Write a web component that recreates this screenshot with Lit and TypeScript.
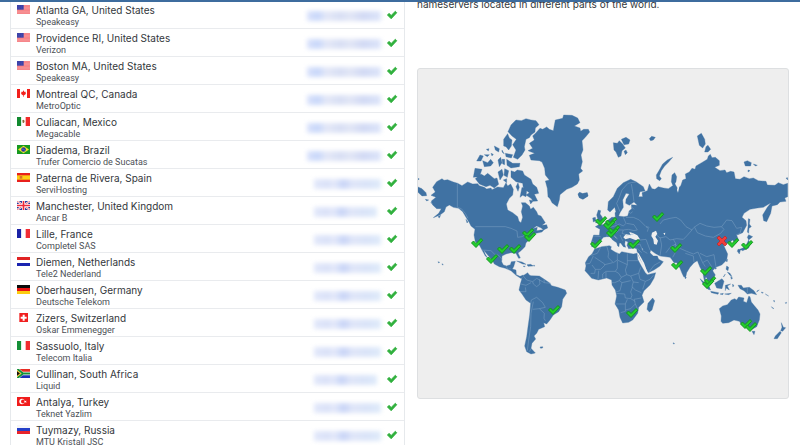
import { LitElement, html, svg, css } from "lit";
import { customElement, property } from "lit/decorators.js";
import { classMap } from "lit/directives/class-map.js";

interface Server {
  flag: string;
  place: string;
  isp: string;
  kind: string;
}

const SERVERS: Server[] = [
  { flag: "us", place: "Atlanta GA, United States", isp: "Speakeasy", kind: "wide" },
  { flag: "us", place: "Providence RI, United States", isp: "Verizon", kind: "wide" },
  { flag: "us", place: "Boston MA, United States", isp: "Speakeasy", kind: "wide" },
  { flag: "ca", place: "Montreal QC, Canada", isp: "MetroOptic", kind: "wide" },
  { flag: "mx", place: "Culiacan, Mexico", isp: "Megacable", kind: "wide" },
  { flag: "br", place: "Diadema, Brazil", isp: "Trufer Comercio de Sucatas", kind: "wide" },
  { flag: "es", place: "Paterna de Rivera, Spain", isp: "ServiHosting", kind: "slim" },
  { flag: "gb", place: "Manchester, United Kingdom", isp: "Ancar B", kind: "speck" },
  { flag: "fr", place: "Lille, France", isp: "Completel SAS", kind: "slim" },
  { flag: "nl", place: "Diemen, Netherlands", isp: "Tele2 Nederland", kind: "slim" },
  { flag: "de", place: "Oberhausen, Germany", isp: "Deutsche Telekom", kind: "slim" },
  { flag: "ch", place: "Zizers, Switzerland", isp: "Oskar Emmenegger", kind: "slim" },
  { flag: "it", place: "Sassuolo, Italy", isp: "Telecom Italia", kind: "slim" },
  { flag: "za", place: "Cullinan, South Africa", isp: "Liquid", kind: "speck" },
  { flag: "tr", place: "Antalya, Turkey", isp: "Teknet Yazlim", kind: "slim" },
  { flag: "ru", place: "Tuymazy, Russia", isp: "MTU Kristall JSC", kind: "slim" },
];

const tri = (a: string, b: string, c: string, vertical: boolean) =>
  vertical
    ? svg`<path fill=${a} d="M0 0h13v27H0z"/><path fill=${b} d="M13 0h13v27H13z"/><path fill=${c} d="M26 0h13v27H26z"/>`
    : svg`<path fill=${a} d="M0 0h39v9H0z"/><path fill=${b} d="M0 9h39v9H0z"/><path fill=${c} d="M0 18h39v9H0z"/>`;

const FLAGS: Record<string, unknown> = {
  us: svg`<path fill="#fba8aa" d="M0 0h39v27H0z"/><path stroke="#f36a70" stroke-width="2" d="M0 1h39M0 5h39M0 9h39M0 13h39M0 17h39M0 21h39M0 25h39"/><path fill="#3a40a8" d="M0 0h20v14H0z"/><path stroke="#6a70c0" stroke-dasharray="2 3" d="M2 3h17M3 7h16M2 11h17"/>`,
  ca: svg`<path fill="#fff" d="M0 0h39v27H0z"/><path fill="#f2201c" d="M0 0h9v27H0zM30 0h9v27h-9zM19.500 4l3 5 4-1-1 5 2 1-6 5h-1v4h-2v-4h-1l-6-5 2-1-1-5 4 1z"/>`,
  mx: svg`${tri("#128a30", "#fff", "#f22a2a", true)}<path fill="#8a6a3a" d="M16 10l4-2 3 4-2 6-4-1z"/>`,
  br: svg`<path fill="#179a20" d="M0 0h39v27H0z"/><path fill="#f5e32a" d="M19.500 2L36 13.500 19.500 25 3 13.500z"/><circle cx="19.500" cy="13.500" r="7" fill="#2436a0"/><path stroke="#dfe8ff" fill="none" d="M13 12q8-1 12 5"/>`,
  es: svg`<path fill="#e8201c" d="M0 0h39v27H0z"/><path fill="#fccf14" d="M0 7h39v13H0z"/><path fill="#d8732a" d="M8 9h8v8H8z"/>`,
  gb: svg`<path fill="#2a3a9c" d="M0 0h39v27H0z"/><path stroke="#fff" stroke-width="6" d="M0 0l39 27M39 0L0 27"/><path stroke="#ee3a48" stroke-width="2" d="M0 0l39 27M39 0L0 27"/><path stroke="#fff" stroke-width="9" d="M19.500 0v27M0 13.500h39"/><path stroke="#ee2a3a" stroke-width="5" d="M19.500 0v27M0 13.500h39"/>`,
  fr: tri("#1a22a6", "#fff", "#f22c34", true),
  nl: tri("#e02424", "#fff", "#1a24b0", false),
  de: tri("#0a0a0a", "#e81414", "#fccc10", false),
  ch: svg`<path fill="#f02020" d="M7 0h26v27H7z"/><path fill="#fff" d="M17 5h6v6h6v6h-6v6h-6v-6h-6v-6h6z"/>`,
  it: tri("#149038", "#fff", "#f02c30", true),
  za: svg`<path fill="#fff" d="M0 0h39v27H0z"/><path fill="#e82c24" d="M8 0h31v8H17z"/><path fill="#1c30b8" d="M17 19h22v8H8z"/><path fill="none" stroke="#149038" stroke-width="6" d="M1 0l17 13.500L1 27M16 13.500h23"/><path fill="#f8c020" d="M0 3l13 10.500L0 24z"/><path fill="#101010" d="M0 7l9 6.500L0 20z"/>`,
  tr: svg`<path fill="#f01c1c" d="M0 0h39v27H0z"/><circle cx="15" cy="13.500" r="8" fill="#fff"/><circle cx="18" cy="13.500" r="6" fill="#f01c1c"/><path fill="#fff" d="M23 10l2 2 4-1-2 3 2 3-4-1-2 2v-3l-3-1 3-1z"/>`,
  ru: tri("#f6f6f8", "#2440c8", "#e8242c", false),
};

const TICK = "M-5.500 0L-3.500-2-1 .5 4-4.500 5.700-2.700-1 4.500z";

/* Each land group keeps its own local grid of a third of a map unit. */
const LANDS = [
  {
    at: "translate(416 100)",
    land: `M50 262L62 245 78 236 84 241 95 239 112 246 125 250 138 257 155 246 170 252 185 251 190 257 205 262 212 267 225 264 228 269 245 261 262 263 270 248 275 258 284 252 292 268 290 285 280 295 271 312 275 330 290 338 305 350 309 364 315 368 320 352 316 335 320 318 316 308 328 308 340 318 344 328 352 322 362 335 366 345 375 348 388 368 378 376 392 374 395 384 382 390 376 384 362 378 350 386 364 382 362 392 385 388 378 396 360 400 345 415 330 428 327 440 315 452 306 459 313 474 308 475 300 460 285 458 270 462 258 468 257 485 262 495 272 498 283 494 286 485 298 484 293 500 289 507 300 510 301 524 312 529 322 525 316 536 300 526 285 512 268 505 250 500 235 492 230 482 215 465 203 450 208 463 215 474 208 468 198 450 190 435 178 425 174 405 177 388 165 378 160 368 150 352 140 335 128 325 112 322 100 315 90 321 85 335 72 345 52 353 68 340 76 326 62 326 50 315 46 303 60 292 45 286 58 276z
M320 528L335 518 340 525 345 527 370 528 385 538 400 548 407 557 425 562 448 570 452 580 440 598 437 620 428 635 412 645 402 660 392 672 383 668 386 680 368 688 362 700 354 708 359 717 348 730 345 745 358 759 345 762 332 755 326 738 332 710 336 680 341 645 344 610 330 600 318 582 309 570 313 552z
M424 320L408 308 402 296 396 290 394 265 388 243 400 240 388 225 386 205 378 186 370 182 345 180 340 166 356 160 336 152 350 145 340 130 355 120 350 108 360 98 372 85 380 88 392 81 400 88 412 92 415 75 418 60 440 55 443 45 468 46 485 54 492 68 475 78 492 84 494 94 503 88 517 88 521 96 508 112 498 122 501 150 495 165 499 185 494 205 500 213 488 222 490 240 484 252 468 262 452 268 432 284 430 300z
M276 95L285 75 300 60 316 62 330 56 345 60 360 62 369 74 358 84 357 96 345 105 340 113 330 118 325 140 327 150 318 165 305 178 292 172 300 150 290 134 301 118 288 108z
M263 118L275 101 280 114 288 120 286 138 278 150 270 140 263 138z
M285 212L296 216 304 210 320 213 325 225 345 238 350 252 362 262 368 280 355 283 365 303 352 304 345 295 330 285 340 278 322 265 320 250 300 245 285 232z
M178 236L195 222 205 228 215 220 235 236 243 234 248 253 235 264 222 256 210 260 190 252z
M172 232L177 205 198 208 190 230z M182 183L192 165 202 168 195 183z M200 182L215 188 224 178 232 188 224 198 205 200z M235 138L250 146 248 156 238 150z M211 148L219 146 217 153z M205 164L220 164 214 170z M225 160L232 163 228 168z M246 180L254 172 258 188 250 200z M258 150L265 162 258 156z M258 178L266 178 266 194 260 192z M268 160L290 164 286 174 270 170z M272 178L290 190 312 190 310 200 285 204 273 196z M246 216L258 208 262 225 252 240z M266 206L278 212 274 232 264 226z M262 240L272 236 272 248z M300 260L306 248 310 262 306 274z M318 262L332 272 330 290 320 286 312 292z M340 300L352 302 344 312z
M486 282L490 277 500 281 512 278 516 288 500 298 490 293z M4 260L18 266 30 278 32 287 18 288 4 275z M4 234L10 237 4 241z M28 298L38 300 32 303z M44 308L52 306 52 313z M66 350L74 346 70 354z M150 358L156 366 153 369z M302 483L318 486 330 493 320 492z M333 494L344 493 352 498 336 499z M322 498L328 499 324 501z M352 496L356 496 355 499z M372 741L380 740 380 744 374 745z M66 485L71 487 68 489z M78 491L82 494 79 495z`,
    lines: `M124 249V322L136 326 148 340 156 355M178 380H268L285 385 303 393 305 412 318 410 335 400 345 392M198 450L225 452 235 462 248 466 258 478M270 498L276 508 284 506M322 528L332 540 350 545 362 535 385 548 405 550M315 552L330 556 345 548M312 575L330 575 328 562M344 610L346 600 362 592 380 608 388 622 370 626 350 628M352 605L345 640 344 680 338 720 334 752M370 626L385 640 384 655 388 662M350 545L352 552 362 560 372 552 370 538M385 548L384 538M340 755L346 745`,
  },
  {
    at: "translate(560 120)",
    land: `M143 270L145 245 160 230 172 205 190 188 212 178 228 185 250 200 255 213 240 215 236 230 248 230 246 218 262 212 268 192 276 206 285 208 295 200 310 204 325 206 345 192 352 204 362 198 368 180 378 176 376 162 388 156 396 145 405 148 408 138 425 128 442 118 445 108 451 103 456 113 466 112 478 122 478 136 464 142 480 152 495 150 500 158 512 154 522 156 526 176 540 178 552 170 568 176 580 174 595 182 618 184 622 195 645 196 655 188 670 194 683 190 683 230 674 234 678 244 660 246 652 254 636 258 632 280 620 305 611 302 608 285 622 262 633 248 610 262 592 264 570 268 552 280 546 292 558 302 560 316 548 338 530 346 536 360 526 372 518 360 508 368 490 372 495 385 503 402 500 420 485 435 467 442 458 452 466 465 458 478 445 484 438 470 436 476 446 495 448 504 440 498 432 478 428 455 420 442 412 422 402 428 390 442 380 458 378 468 372 472 366 460 360 445 350 428 342 428 335 418 330 412 300 408 285 400 272 390 270 398 280 408 292 408 296 418 310 425 300 438 282 450 265 458 258 447 245 425 233 402 230 386 222 384 206 386 201 376 204 366 196 362 194 372 197 382 190 380 180 366 168 352 160 344 165 352 178 362 184 368 178 370 177 380 173 378 170 368 158 360 150 350 140 350 130 352 122 362 116 374 108 381 95 380 94 366 101 345 118 346 120 328 106 320 118 313 130 314 142 302 155 292 166 292 165 278 172 272 175 288 192 290 203 288 208 272 215 266 214 254 232 256 222 246 208 256 197 250 198 238 208 222 198 220 188 240 190 262 180 278 176 288 168 276 164 262 150 276z
M115 270L122 272 120 282 126 290 132 304 124 310 106 308 114 300 110 285z M98 294L106 292 108 302 100 306z M55 224L60 218 68 221 82 218 84 228 70 237 58 232z
M160 68L172 70 178 62 188 72 196 84 186 92 183 108 175 112 168 96 162 90z M184 58L198 52 210 60 206 72 192 74z M192 94L198 90 202 98 196 104z M268 56L275 49 286 52 280 60 272 62z
M338 112L322 120 308 132 298 150 289 165 290 176 299 182 304 176 298 168 304 152 314 138 326 126z M336 165L344 158 350 170 348 185 340 200 334 185z
M412 48L424 40 434 58 436 72 428 84 418 76z M434 96L438 80 444 76 452 88 444 96z M552 126L562 122 574 128 572 138 556 138z M580 132L592 136 586 138z M564 150L570 152 564 156z M678 174L683 173 683 180z
M565 296L570 298 568 312 574 320 567 325 566 340 562 336 564 320z
M566 344L578 350 566 360 562 352z M566 360L570 372 566 384 548 392 540 388 556 380z M534 388L542 388 538 402 532 394z`,
    lines: `M180 275L170 250 178 232 186 210 204 190 214 188M214 192L218 215 222 245M214 188L228 186M190 292L198 310 190 318 178 312 165 318 150 322 140 312M165 292L168 312M198 292L220 292 238 300 258 320 268 322M200 310L222 314 232 330 222 332 205 328 190 330 178 330 168 338M190 330L186 340 200 345 220 342M180 345L188 362M205 275L212 280 218 275M214 260L222 268M258 320L265 325 262 335M300 312L310 300 330 295 348 292 362 300 378 320 396 330 402 322 420 310 440 318 462 322 485 320 500 300 516 302 530 325 545 322 540 340 528 345M404 322L412 338 436 348 460 352 482 340 492 328 484 320M396 330L380 348 370 358 350 356 330 360 318 350 300 354 290 345M340 358L348 372 330 382 318 398M300 352L305 375 300 408M240 360L258 358 270 390M206 386L226 376 240 372 248 392 262 400M232 386L245 398M268 455L282 436 300 426M345 372L360 385 380 394 400 402 414 396 420 410M345 372L350 390 338 412M376 400L400 408 402 426M420 410L428 428 436 440M428 428L442 420 455 440M420 400L440 410 462 404 468 440M101 348L122 350M98 362L104 380M140 350L145 335 155 330`,
  },
  {
    at: "translate(570 230)",
    land: `M74 57L95 50 118 47 124 50 122 58 135 66 148 72 155 65 170 68 190 72 201 70 203 88 214 108 226 128 232 134 257 128 252 145 240 165 222 182 216 196 222 216 206 232 203 250 188 270 176 277 158 279 150 262 146 240 135 222 140 198 136 180 126 165 125 150 110 144 85 150 65 145 52 130 45 122 48 108 46 98 56 80 66 72z M248 204L254 212 246 240 238 246 231 238 234 220z`,
    lines: `M64 76L82 70 92 52M70 78L60 100 48 102M74 82L104 102 104 106 92 118 76 118 66 105M110 48L116 68 114 82 130 98 142 90 142 68M104 104L128 98M142 90L172 104 172 70M172 92H204M142 92L142 115 136 124 108 124 98 132M172 104L166 120 170 134 154 142 146 130 136 124M170 134L182 138 206 130 212 112M206 130L210 148 226 154 240 148 250 136M182 138L190 156 206 158M226 154L218 178M190 156L186 170 196 180 214 188M154 142L148 152 134 158 126 158M148 152L156 158 182 152M156 158L150 182 138 186M138 190L164 192 166 204 182 206 186 196 182 186 188 170M136 222L166 222 172 208M166 222L166 244 152 248M166 240L182 236 196 222 192 208 214 204M182 206L196 214M196 222L202 236M76 118L74 130 62 130M86 122L84 148M98 132L98 146M108 126L108 144`,
  },
  {
    at: "translate(670 230)",
    land: `M148 236L158 228 172 224 184 210 194 206 200 210 206 201 222 204 220 214 230 218 236 199 240 200 244 216 252 226 264 240 270 252 268 270 260 290 246 298 232 294 224 284 216 286 208 274 192 270 176 278 158 280 153 274 154 258z M246 304L255 304 252 314z
M334 278L340 292 347 293 338 304 332 302 336 292z M330 304L334 308 322 326 312 326 316 318z
M90 146L102 156 118 172 122 180 114 178 104 168z M134 160L146 152 156 146 162 154 156 176 140 174z M122 184L146 188 144 193 124 188z M150 192L160 190 158 194z M164 192L184 190 176 194z M166 166L182 162 172 168 178 180 168 174 166 182z M188 162L192 168 188 170z M204 166L214 166 220 174 238 172 252 182 260 194 244 190 232 192 222 182 210 176z M262 182L268 180 260 186z M170 108L176 112 174 122 168 118z M172 126L180 130 186 140 178 134z M182 140L188 144 184 148z M160 140L166 132 162 140z M168 92L173 88 171 96z M134 112L140 114 136 118z M44 136L49 142 46 147z M274 186L280 188 276 190z M286 192L296 198 290 195z M304 230L312 236 308 235z M346 218L350 217 348 221z M312 210L314 216 311 214z M10 338L14 341 10 342z`,
    lines: `M232 172V190`,
  },
];

/* Inland waters, on the grid of the Eurasian group. */
const WATERS = `M190 352L198 342 212 346 208 336 220 340 232 346 240 358 226 360 210 354 196 358z M276 338L288 332 292 342 286 350 294 362 290 374 282 372 280 358 274 348z M310 340L316 338 314 346z M246 384L250 390 246 388z M238 412L230 396 236 400 252 428 262 456 256 452z M355 188L360 180 358 200 354 218 351 210z`;

const TICKS = [
  [477, 243], [492, 259], [503, 249], [515, 249], [528, 233], [530, 237], [554, 310], [596, 244],
  [658, 217], [601, 221], [611, 222], [609, 225], [614, 230], [612, 233], [634, 244], [632, 313],
  [676, 248], [677, 265], [733, 243], [747, 245], [706, 271], [710, 281], [708, 284], [746, 324], [751, 327],
];

@customElement("server-flag")
class ServerFlag extends LitElement {
  @property() code = "";
  static styles = css`
    :host { display: block; width: 13px; height: 9px; }
    svg { display: block; width: 100%; height: 100%; }
  `;
  render() {
    return html`<svg viewBox="0 0 39 27" preserveAspectRatio="none" aria-hidden="true">${FLAGS[this.code]}</svg>`;
  }
}

@customElement("server-table")
class ServerTable extends LitElement {
  static styles = css`
    :host { display: block; border: 1px solid #e6e9ec; }
    table { width: 100%; border-collapse: collapse; table-layout: fixed; }
    td { height: 27px; padding: 0; border-bottom: 1px solid #e9ebee; vertical-align: top; }
    .flag { width: 25px; }
    .flag server-flag { margin: 4px 0 0 6px; }
    .result { width: 76px; }
    .state { width: 22px; }
    .place { display: block; padding-top: 2px; font-size: 10px; line-height: 14px; color: #33373c; white-space: nowrap; }
    .isp { display: block; font-family: Roboto, Inter, sans-serif; font-size: 9px; line-height: 10px; color: #4c5056; white-space: nowrap; }
    .veil {
      position: relative;
      height: 10px;
      margin: 10px 1px 0 1px;
      background: linear-gradient(90deg, #dbe3fb, #c9d8fa 14%, #e4e8f7 27%, #d8dff4 45%, #e2e6f6 58%, #d2daf4 76%, #dde5fa);
      filter: blur(2px);
    }
    .slim { margin-left: 8px; background: linear-gradient(90deg, #e2e8fa, #dbe2f8 20%, #e4e9fa 30%, #c9d5f7 44%, #e0e6f8 58%, #dae4f8 80%, #dfebfa); }
    .speck { margin-right: 5px; }
    .tick { display: block; width: 12px; height: 10px; margin: 9px 0 0 4px; }
  `;
  render() {
    return html`<table aria-label="DNS results">
      <tbody>
        ${SERVERS.map(
          (s) => html`<tr>
            <td class="flag"><server-flag code=${s.flag}></server-flag></td>
            <td><span class="place">${s.place}</span><span class="isp">${s.isp}</span></td>
            <td class="result"><div class=${classMap({ veil: true, slim: s.kind !== "wide", speck: s.kind === "speck" })}></div></td>
            <td class="state">
              <svg class="tick" viewBox="-7 -6 14 12" role="img" aria-label="Resolved">
                <path d=${TICK} fill="#2fb03c" stroke="#2fb03c" stroke-linejoin="round" />
              </svg>
            </td>
          </tr>`
        )}
      </tbody>
    </table>`;
  }
}

@customElement("world-map")
class WorldMap extends LitElement {
  static styles = css`
    :host { display: block; border: 1px solid #dddfe1; border-radius: 3px; background: #eee; overflow: hidden; }
    svg { display: block; width: 100%; height: auto; }
    .land { fill: #4072a3; stroke: #4072a3; stroke-width: 1; stroke-linejoin: round; }
    .lines { fill: none; stroke: #7fa3c6; stroke-width: 1.5; stroke-linejoin: round; }
    .water { fill: #eee; }
    .ok { fill: #22cc2c; stroke: #159422; stroke-width: 1; stroke-linejoin: round; }
    .bad { fill: #f03c3c; stroke: #b82828; stroke-width: 0.7; stroke-linejoin: round; }
  `;
  render() {
    return html`<svg viewBox="418 69 370 329" role="img" aria-label="World map of nameservers">
      ${LANDS.map((g) => svg`<g transform="${g.at} scale(.33333)"><path class="land" d=${g.land}/></g>`)}
      <g transform="translate(560 120) scale(.33333)"><path class="water" d=${WATERS} /></g>
      ${LANDS.map((g) => svg`<g transform="${g.at} scale(.33333)"><path class="lines" d=${g.lines}/></g>`)}
      <path class="bad" transform="translate(722 241)" d="M-5-3L-3-5 0-2 3-5 5-3 2 0 5 3 3 5 0 2-3 5-5 3-2 0z" />
      ${TICKS.map(([x, y]) => svg`<path class="ok" transform="translate(${x} ${y})" d=${TICK}/>`)}
    </svg>`;
  }
}

@customElement("app-root")
class AppRoot extends LitElement {
  static styles = css`
    :host {
      display: block;
      position: relative;
      height: 100vh;
      overflow: hidden;
      background: #fff;
      font-family: Inter, "Liberation Sans", sans-serif;
    }
    .bar { position: absolute; top: 0; left: 0; right: 0; z-index: 1; height: 2px; background: #3d6c9e; }
    main { display: grid; grid-template-columns: 395fr 372fr; gap: 12px; align-items: start; padding: 0 11px 0 10px; }
    aside { display: grid; gap: 56px; margin-top: -4px; }
    p { margin: 0; font-size: 10px; line-height: 16px; color: #33373c; white-space: nowrap; }
  `;
  render() {
    return html`<header class="bar"></header>
      <main>
        <server-table></server-table>
        <aside>
          <p>nameservers located in different parts of the world.</p>
          <world-map></world-map>
        </aside>
      </main>`;
  }
}
